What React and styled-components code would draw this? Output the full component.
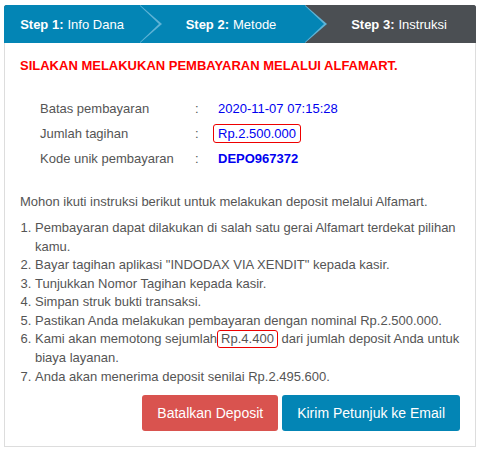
import React from 'react'
import styled, { createGlobalStyle } from 'styled-components';

const GlobalStyle = createGlobalStyle`
body {
    margin: 0;
    background: #fff;
    font-family: "Liberation Sans", Arial, sans-serif;
    font-size: 13px;
    color: #555;
}
`

const Page = styled.div`
padding: 5px 4px 4px;
`

const Steps = styled.div`
display: flex;
height: 38px;
border-radius: 3px 3px 0 0;
overflow: hidden;
background: #4b4f53;
`

const Step = styled.div`
position: relative;
display: flex;
align-items: center;
justify-content: center;
width: ${p => p.width}px;
flex: ${p => p.grow ? '1' : 'none'};
padding-left: ${p => p.first ? 0 : 17}px;
box-sizing: border-box;
background: ${p => p.active ? '#0385b5' : '#4b4f53'};
color: #fff;
font-size: 13px;
z-index: ${p => p.z};
b { font-weight: bold; margin-right: 4px; }
${p => p.active && `
&::before, &::after {
    content: '';
    position: absolute;
    top: 0;
    left: 100%;
    height: 100%;
    clip-path: polygon(0 0, 100% 50%, 0 100%);
}
&::before {
    width: 22px;
    background: #5fb3d6;
}
&::after {
    width: 20px;
    margin-left: -1px;
    background: #0385b5;
}
`}
`

const Panel = styled.div`
border: 1px solid #ddd;
border-top: none;
padding: 13px 15px 15px;
`

const Warning = styled.div`
color: #f00;
font-weight: bold;
line-height: 19px;
`

const InfoTable = styled.div`
display: grid;
grid-template-columns: 155px 18px auto;
align-items: center;
margin: 21px 0 21px 20px;
line-height: 19px;
`

const Label = styled.div`
height: 25px;
display: flex;
align-items: center;
`

const Value = styled.span`
display: inline-block;
justify-self: start;
padding: 0 4px;
line-height: 17px;
border: 1px solid ${p => p.boxed ? '#e00' : 'transparent'};
border-radius: 3px;
color: #0000f0;
font-weight: ${p => p.bold ? 'bold' : 'normal'};
`

const Intro = styled.p`
margin: 0 0 8px;
line-height: 19px;
`

const Steplist = styled.ol`
margin: 0;
padding-left: 15px;
line-height: 1.43;
`

const Fee = styled.span`
display: inline-block;
padding: 0 3px;
line-height: 16px;
border: 1px solid #e00;
border-radius: 3px;
`

const Actions = styled.div`
display: flex;
justify-content: flex-end;
gap: 4px;
margin-top: 9px;
`

const Button = styled.button`
height: 36px;
padding: 0 15px;
border: none;
border-radius: 3px;
background: ${p => p.danger ? '#d9534f' : '#0385b5'};
color: #fff;
font-family: "Liberation Sans", Arial, sans-serif;
font-size: 14px;
cursor: pointer;
`

const info = [
    { label: 'Batas pembayaran', value: '2020-11-07 07:15:28' },
    { label: 'Jumlah tagihan', value: 'Rp.2.500.000', boxed: true },
    { label: 'Kode unik pembayaran', value: 'DEPO967372', bold: true },
]

function App() {
    return (
        <Page>
            <GlobalStyle />
            <Steps>
                <Step active first width={136} z={3}><b>Step 1:</b>Info Dana</Step>
                <Step active width={165} z={2}><b>Step 2:</b>Metode</Step>
                <Step grow z={1}><b>Step 3:</b>Instruksi</Step>
            </Steps>
            <Panel>
                <Warning>SILAKAN MELAKUKAN PEMBAYARAN MELALUI ALFAMART.</Warning>
                <InfoTable>
                    {info.map(row => (
                        <React.Fragment key={row.label}>
                            <Label>{row.label}</Label>
                            <Label>:</Label>
                            <Value boxed={row.boxed} bold={row.bold}>{row.value}</Value>
                        </React.Fragment>
                    ))}
                </InfoTable>
                <Intro>Mohon ikuti instruksi berikut untuk melakukan deposit melalui Alfamart.</Intro>
                <Steplist>
                    <li>Pembayaran dapat dilakukan di salah satu gerai Alfamart terdekat pilihan kamu.</li>
                    <li>Bayar tagihan aplikasi "INDODAX VIA XENDIT" kepada kasir.</li>
                    <li>Tunjukkan Nomor Tagihan kepada kasir.</li>
                    <li>Simpan struk bukti transaksi.</li>
                    <li>Pastikan Anda melakukan pembayaran dengan nominal Rp.2.500.000.</li>
                    <li>Kami akan memotong sejumlah<Fee>Rp.4.400</Fee> dari jumlah deposit Anda untuk biaya layanan.</li>
                    <li>Anda akan menerima deposit senilai Rp.2.495.600.</li>
                </Steplist>
                <Actions>
                    <Button danger>Batalkan Deposit</Button>
                    <Button>Kirim Petunjuk ke Email</Button>
                </Actions>
            </Panel>
        </Page>
    )
}

export default App;
